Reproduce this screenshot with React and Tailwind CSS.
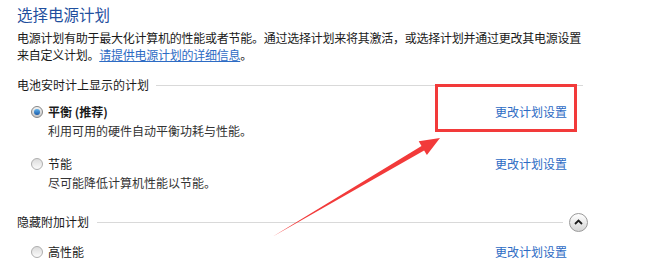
import React from "react";

const FONT = { fontFamily: "'Noto Sans CJK SC', 'Noto Sans', sans-serif" };

function Radio({ checked }) {
  if (checked) {
    return (
      <div className="w-[12px] h-[12px] rounded-full border border-[#858585] bg-gradient-to-b from-[#f4f4f4] to-[#c4c4c4] flex items-center justify-center shrink-0">
        <div className="w-[6px] h-[6px] rounded-full bg-gradient-to-b from-[#5fb3ee] to-[#1a5aa8]" />
      </div>
    );
  }
  return (
    <div className="w-[12px] h-[12px] rounded-full border border-[#aeaeae] bg-gradient-to-b from-[#dcdcdc] to-[#fbfbfb] shrink-0" />
  );
}

function PlanRow({ checked, name, bold, className = "" }) {
  return (
    <div className={"flex items-center justify-between h-[16px] pl-[14px] pr-[16px] " + className}>
      <div className="flex items-center gap-[5px]">
        <Radio checked={checked} />
        <span className={"text-[12px] leading-[16px] text-[#1a1a1a] " + (bold ? "font-bold" : "")}>{name}</span>
      </div>
      <span className="text-[12px] leading-[16px] text-[#2d6bc4]">更改计划设置</span>
    </div>
  );
}

export default function App() {
  return (
    <div className="relative w-[650px] h-[262px] bg-white overflow-hidden" style={FONT}>
      <div className="w-[583px] pl-[17px] pt-[4px]">
        <div className="text-[15.5px] leading-[20px] text-[#1f4f9e]">选择电源计划</div>
        <div className="mt-[5px] text-[12px] leading-[17px] text-[#1a1a1a] tracking-[-0.25px] whitespace-nowrap">
          电源计划有助于最大化计算机的性能或者节能。通过选择计划来将其激活，或选择计划并通过更改其电源设置
          <br />
          来自定义计划。<span className="text-[#2d6bc4] underline">请提供电源计划的详细信息</span>。
        </div>

        <div className="mt-[14px] flex items-center h-[16px] gap-[7px]">
          <span className="text-[12px] leading-[16px] text-[#1a1a1a] whitespace-nowrap">电池安时计上显示的计划</span>
          <div className="flex-1 h-px bg-[#d9d9d9]" />
        </div>

        <PlanRow checked name="平衡 (推荐)" bold className="mt-[11px]" />
        <div className="mt-[3px] pl-[31px] text-[12px] leading-[16px] text-[#333]">利用可用的硬件自动平衡功耗与性能。</div>

        <PlanRow name="节能" className="mt-[17px]" />
        <div className="mt-[3px] pl-[31px] text-[12px] leading-[16px] text-[#333]">尽可能降低计算机性能以节能。</div>

        <div className="mt-[23px] flex items-center h-[16px] gap-[8px] w-[571px]">
          <span className="text-[12px] leading-[16px] text-[#1a1a1a] whitespace-nowrap">隐藏附加计划</span>
          <div className="flex-1 h-px bg-[#d9d9d9]" />
          <div className="w-[19px] h-[19px] rounded-full border border-[#9a9a9a] bg-gradient-to-b from-white to-[#d6d6d6] flex items-center justify-center shrink-0 ml-[-2px]">
            <svg width="9" height="6" viewBox="0 0 9 6">
              <polyline points="1,5 4.5,1.5 8,5" fill="none" stroke="#1e1e1e" strokeWidth="1.8" />
            </svg>
          </div>
        </div>

        <PlanRow name="高性能" className="mt-[14px]" />
      </div>

      {/* annotation: red box */}
      <div className="absolute left-[435px] top-[84px] w-[142px] h-[48px] border-[3px] border-[#f23a3a]" />
      {/* annotation: arrow */}
      <svg className="absolute left-0 top-0" width="650" height="262" viewBox="0 0 650 262">
        <polygon
          points="272,237 421.5,146 418.7,141.3 440,138 426.9,155.1 424.1,150.4"
          fill="#f23a3a"
        />
      </svg>
    </div>
  );
}
